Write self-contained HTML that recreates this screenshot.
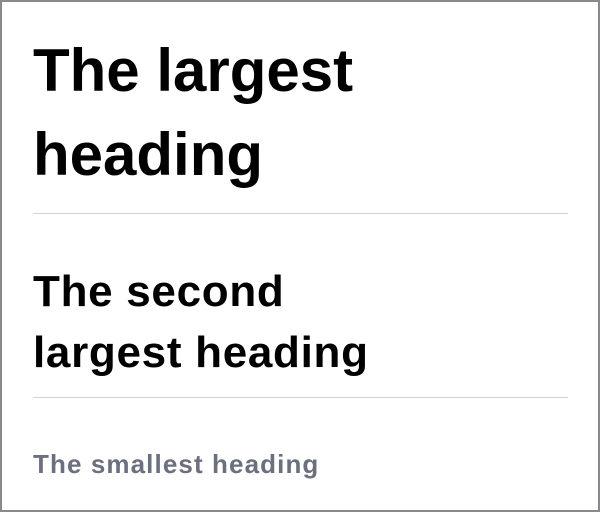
<!DOCTYPE html>
<html><head><meta charset="utf-8"><style>
html,body{margin:0;padding:0}
body{width:600px;height:512px;position:relative;overflow:hidden;background:#fff;font-family:"Liberation Sans",sans-serif}
.frame{position:absolute;left:0;top:0;width:596px;height:508px;border:2px solid #8a8a8e}
.t{position:absolute;left:33px;font-weight:bold;color:#000;white-space:nowrap}
.hr{position:absolute;left:33px;width:535px;height:1px;background:#d4d4d6}
</style></head><body>
<div class="frame"></div>
<div class="t" style="top:29px;font-size:60px;line-height:84px">The largest<br>heading</div>
<div class="hr" style="top:213px"></div>
<div class="t" style="top:261px;font-size:44px;line-height:61px;letter-spacing:0.7px">The second<br>largest heading</div>
<div class="hr" style="top:397px"></div>
<div class="t" style="top:449px;font-size:26px;line-height:30px;color:#6b6f7e;letter-spacing:1.1px">The smallest heading</div>
</body></html>
